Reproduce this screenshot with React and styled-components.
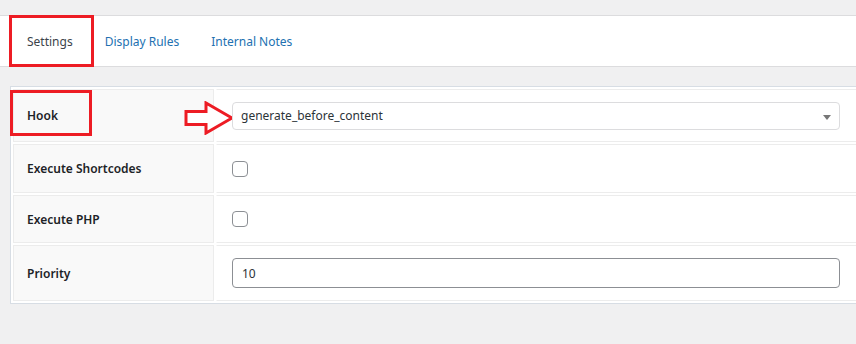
import React from 'react';
import styled, { createGlobalStyle } from 'styled-components';

const GlobalStyle = createGlobalStyle`
  html, body {
    margin: 0;
    padding: 0;
    background: #f0f0f1;
    overflow: hidden;
  }
  body {
    font-family: "Noto Sans", "Open Sans", Arial, sans-serif;
    font-size: 12px;
    color: #3c434a;
  }
  * {
    box-sizing: border-box;
  }
`;

const Page = styled.div`
  padding-top: 15px;
  width: 856px;
  height: 344px;
`;

const TabBar = styled.nav`
  display: flex;
  align-items: center;
  height: 52px;
  padding-left: 11px;
  background: #fff;
  border-top: 1px solid #dcdcde;
  border-bottom: 1px solid #dcdcde;
`;

const Tab = styled.a`
  position: relative;
  display: flex;
  align-items: center;
  height: 100%;
  padding: 0 16px;
  color: ${props => (props.$active ? '#3c434a' : '#2271b1')};
  text-decoration: none;
  cursor: pointer;
`;

const Highlight = styled.span`
  position: absolute;
  border: 3px solid #ed1c24;
  pointer-events: none;
  left: ${props => props.$left}px;
  top: ${props => props.$top}px;
  width: ${props => props.$width}px;
  height: ${props => props.$height}px;
`;

const Table = styled.table`
  margin: 19px 0 0 10px;
  width: 850px;
  background: #fff;
  border: 1px solid #d7dde4;
  border-collapse: separate;
  border-spacing: 2px;
`;

const Label = styled.th`
  position: relative;
  width: 201px;
  height: ${props => props.$height}px;
  padding: 0 13px;
  background: #f9f9f9;
  border: 1px solid #ececec;
  text-align: left;
  vertical-align: middle;
  font-weight: 600;
  color: #1d2327;
`;

const Value = styled.td`
  position: relative;
  padding: 0 16px 0 15px;
  border: 1px solid #ececec;
  border-left-color: #fff;
  vertical-align: middle;
`;

const SelectBox = styled.div`
  position: relative;
  display: flex;
  align-items: center;
  height: 28px;
  padding: 0 8px;
  border: 1px solid #dcdcde;
  border-radius: 4px;
  background: #fff;
  color: #2c3338;
  font-size: 12px;

  &::after {
    content: '';
    position: absolute;
    right: 8px;
    top: 12px;
    border-left: 4px solid transparent;
    border-right: 4px solid transparent;
    border-top: 5px solid #777;
  }
`;

const Checkbox = styled.span`
  display: block;
  width: 16px;
  height: 16px;
  border: 1px solid #8c8f94;
  border-radius: 4px;
  background: #fff;
`;

const TextInput = styled.input`
  display: block;
  width: 100%;
  height: 30px;
  padding: 0 9px;
  border: 1px solid #8c8f94;
  border-radius: 4px;
  background: #fff;
  color: #2c3338;
  font-family: inherit;
  font-size: 12px;
  outline: none;
`;

const Arrow = styled.svg`
  position: absolute;
  left: -33px;
  top: 11px;
`;

const HookArrow = () => (
  <Arrow width="50" height="34" viewBox="0 0 50 34">
    <polygon
      points="2,10.5 22,10.5 22,2 48,17 22,32 22,23.5 2,23.5"
      fill="#fff"
      stroke="#ed1c24"
      strokeWidth="3"
      strokeLinejoin="miter"
    />
  </Arrow>
);

const App = () => {
  return (
    <>
      <GlobalStyle />
      <Page>
        <TabBar>
          <Tab $active>
            Settings
            <Highlight $left={-2} $top={-1} $width={85} $height={52} />
          </Tab>
          <Tab>Display Rules</Tab>
          <Tab>Internal Notes</Tab>
        </TabBar>

        <Table>
          <tbody>
            <tr>
              <Label $height={53}>
                Hook
                <Highlight $left={-4} $top={0} $width={82} $height={46} />
              </Label>
              <Value>
                <HookArrow />
                <SelectBox>generate_before_content</SelectBox>
              </Value>
            </tr>
            <tr>
              <Label $height={49}>Execute Shortcodes</Label>
              <Value>
                <Checkbox />
              </Value>
            </tr>
            <tr>
              <Label $height={48}>Execute PHP</Label>
              <Value>
                <Checkbox />
              </Value>
            </tr>
            <tr>
              <Label $height={56}>Priority</Label>
              <Value>
                <TextInput defaultValue="10" />
              </Value>
            </tr>
          </tbody>
        </Table>
      </Page>
    </>
  );
};

export default App;
